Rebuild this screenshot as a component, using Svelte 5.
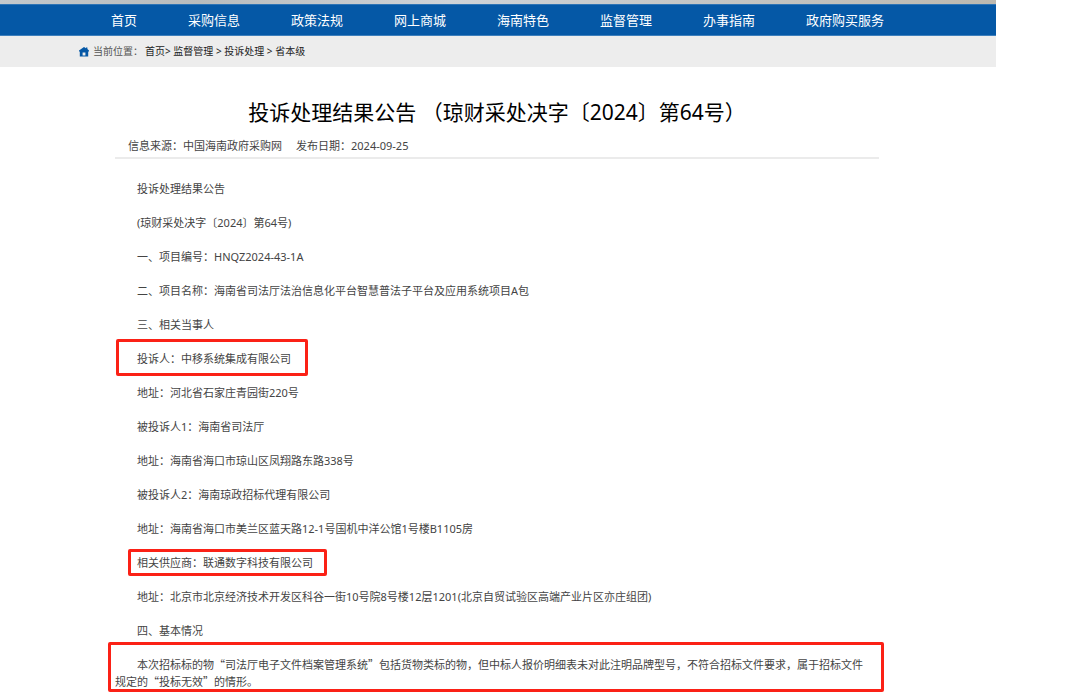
<script lang="ts">
	const menu = [
		'首页',
		'采购信息',
		'政策法规',
		'网上商城',
		'海南特色',
		'监督管理',
		'办事指南',
		'政府购买服务'
	];

	const paragraphs = [
		{ text: '投诉处理结果公告' },
		{ text: '(琼财采处决字〔2024〕第64号)' },
		{ text: '一、项目编号：HNQZ2024-43-1A' },
		{ text: '二、项目名称：海南省司法厅法治信息化平台智慧普法子平台及应用系统项目A包' },
		{ text: '三、相关当事人' },
		{ text: '投诉人：中移系统集成有限公司', mark: 'complainant' },
		{ text: '地址：河北省石家庄青园街220号' },
		{ text: '被投诉人1：海南省司法厅' },
		{ text: '地址：海南省海口市琼山区凤翔路东路338号' },
		{ text: '被投诉人2：海南琼政招标代理有限公司' },
		{ text: '地址：海南省海口市美兰区蓝天路12-1号国机中洋公馆1号楼B1105房' },
		{ text: '相关供应商：联通数字科技有限公司', mark: 'supplier' },
		{ text: '地址：北京市北京经济技术开发区科谷一街10号院8号楼12层1201(北京自贸试验区高端产业片区亦庄组团)' },
		{ text: '四、基本情况' }
	];
</script>

<div class="page" lang="zh-CN">
	<div class="banner"></div>

	<nav class="menu">
		{#each menu as item}
			<a href="#top">{item}</a>
		{/each}
	</nav>

	<div class="crumbs">
		<svg class="home" viewBox="0 0 10 10" aria-hidden="true">
			<path
				fill="#0558a6"
				fill-rule="evenodd"
				d="M5 0 L7 1.2 V0.6 H8.4 V2.1 L10 3.4 V4.6 H9.2 V9.4 H0.8 V4.6 H0 V3.4 Z M3.6 5.4 V8.4 H6.4 V5.4 Z"
			/>
		</svg>
		<span class="label">当前位置：</span>
		<span>
			<a href="#home">首页</a>&gt; <a href="#supervise">监督管理</a> &gt;
			<a href="#complaint">投诉处理</a> &gt; <a href="#province">省本级</a>
		</span>
	</div>

	<article>
		<h1>投诉处理结果公告 （琼财采处决字〔2024〕第64号）</h1>
		<div class="meta">
			<span>信息来源：中国海南政府采购网</span>
			<span>发布日期：2024-09-25</span>
		</div>

		<div class="content">
			{#each paragraphs as p}
				<p>
					{#if p.mark}
						<span class="marked {p.mark}">{p.text}</span>
					{:else}
						{p.text}
					{/if}
				</p>
			{/each}
			<p class="marked situation">
				本次招标标的物“司法厅电子文件档案管理系统”包括货物类标的物，但中标人报价明细表未对此注明品牌型号，不符合招标文件要求，属于招标文件规定的“投标无效”的情形。
			</p>
		</div>
	</article>
</div>

<style>
	:global(body) {
		margin: 0;
		background: #fff;
	}

	.page {
		margin-right: 84px;
		font-family: 'Noto Sans', 'Noto Sans CJK SC', sans-serif;
		font-size: 11px;
		line-height: 17px;
		color: #444;
	}

	a {
		color: inherit;
		text-decoration: none;
	}

	.banner {
		height: 4px;
		background: linear-gradient(90deg, #c3c8cc, #b9bcbd 20%, #cfd3d8 45%, #c4c6c6 70%, #bdb9b0);
	}

	.menu {
		display: flex;
		gap: 51px;
		padding-left: 111px;
		background: #0558a6;
		border-top: 1px solid #2f74b5;
		border-bottom: 1px solid #3d7fbc;
		font-size: 13px;
		line-height: 30px;
		color: #fff;
		white-space: nowrap;
	}

	.crumbs {
		display: flex;
		align-items: center;
		padding-left: 79px;
		background: #ededed;
		font-size: 10px;
		line-height: 31px;
		color: #222;
	}

	.home {
		width: 10px;
		height: 10px;
		margin-right: 4px;
	}

	.label {
		margin-right: 2px;
		color: #555;
	}

	article {
		padding: 29px 117px 0 115px;
	}

	h1 {
		margin: 0;
		font-size: 21px;
		font-weight: 400;
		line-height: 32px;
		text-align: center;
		color: #000;
	}

	.meta {
		display: flex;
		gap: 14px;
		padding: 9px 13px 3px;
		border-bottom: 2px solid #ebebeb;
	}

	.content {
		padding: 4px 14px 0 0;
	}

	p {
		margin: 17px 0;
		text-indent: 2em;
	}

	.marked {
		position: relative;
	}

	/* red frames drawn over the text */
	.marked::after {
		content: '';
		position: absolute;
		border: 3px solid #fb2116;
		border-radius: 2px;
	}

	.complainant::after {
		inset: -12px -17px -10px -21px;
	}

	.supplier::after {
		inset: -6px -14px -6px -9px;
	}

	/* full-width quotation marks need the Chinese face first */
	.situation {
		font-family: 'Noto Sans CJK SC', sans-serif;
	}

	.situation::after {
		inset: -14px -19px -2px -7px;
	}
</style>
